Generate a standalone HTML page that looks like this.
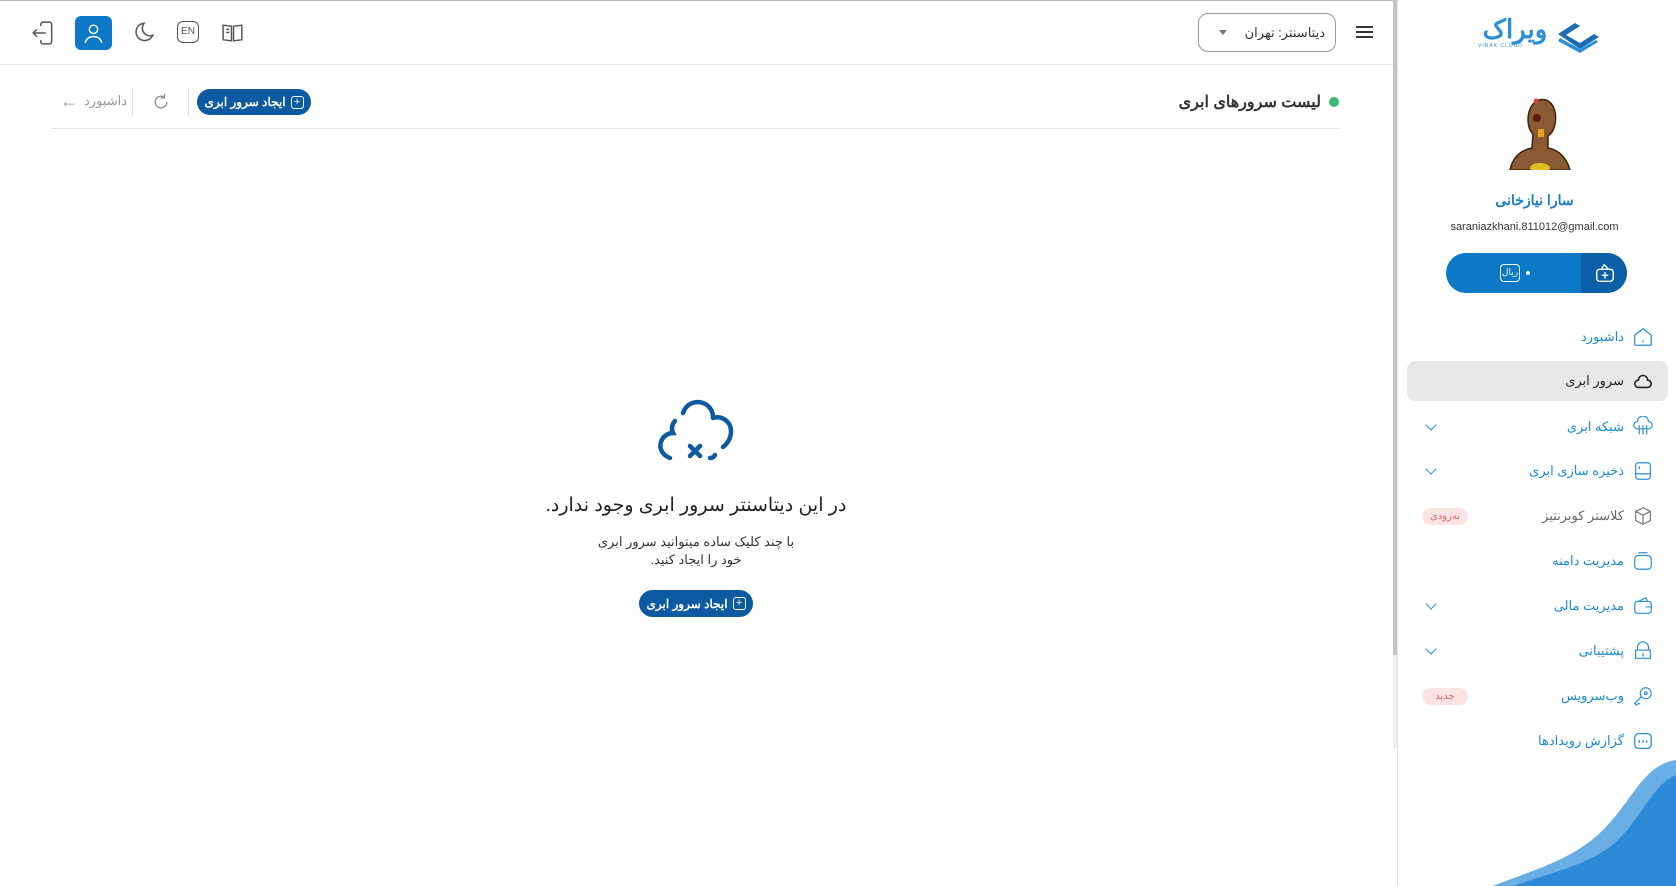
<!DOCTYPE html>
<html><head><meta charset="utf-8"><style>
*{margin:0;padding:0;box-sizing:border-box}
body{width:1676px;height:886px;background:#fff;position:relative;overflow:hidden;font-family:"Liberation Sans","Noto Sans CJK SC",sans-serif;color:#333}
.a{position:absolute}
.r{direction:rtl}
.btn{background:#0b5aa2;color:#fff;border-radius:14px;font-size:12px;font-weight:bold;display:flex;align-items:center;justify-content:center;gap:5px;direction:rtl}
.pl{width:13px;height:13px;border:1.3px solid #fff;border-radius:3px;font-size:11px;line-height:10px;text-align:center;font-weight:normal}
.mi{position:absolute;right:22px;display:flex;align-items:center;gap:8px;direction:rtl;font-size:13px;color:#1a8ad0}
.chev{position:absolute;left:1427px;width:8px;height:8px;border-right:1.6px solid #2a8fd6;border-bottom:1.6px solid #2a8fd6;transform:rotate(45deg)}
.badge{position:absolute;left:1422px;width:46px;height:17px;border-radius:9px;background:#fde4e4;color:#e06666;font-size:10px;text-align:center;line-height:17px}
</style></head><body>
<div class="a" style="left:0;top:0;width:1393px;height:1px;background:#bbb"></div>
<div class="a" style="left:0;top:64px;width:1393px;height:1px;background:#e6e6e6"></div>
<svg class="a" style="left:30px;top:20px" width="26" height="26" viewBox="0 0 24 24" fill="none" stroke="#555" stroke-width="1.4" stroke-linecap="round"><path d="M10 5V4a2 2 0 0 1 2-2h6a2 2 0 0 1 2 2v16a2 2 0 0 1-2 2h-6a2 2 0 0 1-2-2v-1"/><path d="M14 12H3m3-3-3 3 3 3"/></svg>
<div class="a" style="left:75px;top:16px;width:37px;height:34px;background:#0b78c8;border-radius:6px"></div>
<svg class="a" style="left:81px;top:21px" width="25" height="25" viewBox="0 0 24 24" fill="none" stroke="#fff" stroke-width="1.4"><circle cx="12" cy="8" r="4"/><path d="M4 21c1-4 4-6 8-6s7 2 8 6"/></svg>
<svg class="a" style="left:130px;top:20px" width="26" height="26" viewBox="0 0 24 24" fill="none" stroke="#555" stroke-width="1.4"><path d="M13 3a8 8 0 1 0 8 11A7 7 0 0 1 13 3z"/></svg>
<div class="a" style="left:177px;top:21px;width:22px;height:22px;border:1.4px solid #555;border-radius:6px;font-size:10px;line-height:19px;text-align:center;color:#555">EN</div>
<svg class="a" style="left:220px;top:20px" width="25" height="25" viewBox="0 0 24 24" fill="none" stroke="#555" stroke-width="1.4"><path d="M3 5l8 1v14l-8-1zM21 5l-8 1v14l8-1z"/><path d="M6 9h3M6 12h3"/></svg>
<div class="a r" style="left:1198px;top:13px;width:138px;height:39px;border:1px solid #999;border-radius:10px;font-size:13px;line-height:37px;padding-right:10px;color:#333">دیتاسنتر: تهران</div>
<div class="a" style="left:1219px;top:30px;border-left:4px solid transparent;border-right:4px solid transparent;border-top:5px solid #777"></div>
<div class="a" style="left:1356px;top:26px;width:17px;height:2px;background:#333;box-shadow:0 5px 0 #333,0 10px 0 #333"></div>
<div class="a" style="left:1329px;top:97px;width:10px;height:10px;border-radius:50%;background:#3cb878"></div>
<div class="a r" style="right:355px;top:92px;font-size:16px;font-weight:bold;color:#333">لیست سرورهای ابری</div>
<div class="a btn" style="left:197px;top:89px;width:114px;height:26px"><span class="pl">+</span>ایجاد سرور ابری</div>
<div class="a" style="left:188px;top:88px;width:1px;height:28px;background:#ddd"></div>
<div class="a" style="left:132px;top:88px;width:1px;height:28px;background:#ddd"></div>
<svg class="a" style="left:151px;top:92px" width="20" height="20" viewBox="0 0 24 24" fill="none" stroke="#888" stroke-width="1.5"><path d="M19 12a7 7 0 1 1-3-5.7"/><path d="M16 3v4h-4" stroke-linecap="round"/></svg>
<div class="a r" style="left:84px;top:93px;font-size:13px;color:#999">داشبورد</div>
<div class="a" style="left:60px;top:92px;color:#999;font-size:18px;line-height:18px">←</div>
<div class="a" style="left:51px;top:128px;width:1289px;height:1px;background:#e6e6e6"></div>
<svg class="a" style="left:656px;top:398px" width="80" height="66" viewBox="0 0 80 66" fill="none" stroke="#0b5aa2" stroke-width="4.5" stroke-linecap="round"><path d="M14 60C6 57 3 50 5 44c2-6 7-9 12-9 -2-4-1-9 2-12"/><path d="M27 15c3-9 12-13 20-10 6 2 10 8 10 14"/><path d="M57 20c9-3 18 4 18 13 0 7-3 12-8 16"/><path d="M59 57c-1 2-3 3-5 3"/><path d="M34 48l10 10M44 48l-10 10"/></svg>
<div class="a r" style="left:400px;width:592px;top:494px;text-align:center;font-size:19px;color:#222">در این دیتاسنتر سرور ابری وجود ندارد.</div>
<div class="a r" style="left:500px;width:392px;top:533px;text-align:center;font-size:13px;color:#333;line-height:18px">با چند کلیک ساده میتوانید سرور ابری<br>خود را ایجاد کنید.</div>
<div class="a btn" style="left:639px;top:590px;width:114px;height:27px"><span class="pl">+</span>ایجاد سرور ابری</div>
<div class="a" style="left:1393px;top:0;width:4px;height:655px;background:#c4c4c4"></div>
<div class="a" style="left:1393px;top:655px;width:4px;height:93px;background:#eee"></div>
<div class="a" style="left:1397px;top:0;width:1px;height:886px;background:#e4e4e4"></div>
<!-- logo -->
<svg class="a" style="left:1558px;top:16px" width="42" height="38" viewBox="85 0 42 38"><path d="M85 18l17-11 5 3-14 9 14 8 14-9 5 3-19 12z" fill="#1c6cb6"/><path d="M85 25l22 12 18-11-2-2-16 9-20-11z" fill="#2a8fd6"/></svg>
<div class="a r" style="left:1474px;top:14px;width:82px;text-align:center;font-size:26px;font-weight:bold;color:#2a8fd6;line-height:30px">ویراک</div>
<div class="a" style="left:1478px;top:43px;font-size:5px;color:#2a8fd6;letter-spacing:1px">VIRAK CLOUD</div>
<svg class="a" style="left:1508px;top:94px" width="64" height="76" viewBox="0 0 64 76"><path d="M2 76c3-14 12-20 22-22l1-14c-5-5-6-14-4-22 3-10 10-14 17-12 8 3 11 13 9 24-1 6-4 10-7 12v12c10 2 18 8 22 22z" fill="#8a5a33" stroke="#3a2410" stroke-width="1.5"/><circle cx="29" cy="24" r="4" fill="#5a1a10"/><rect x="30" y="35" width="6" height="8" fill="#e8a020"/><circle cx="28" cy="7" r="2.5" fill="#e04040"/><ellipse cx="32" cy="74" rx="10" ry="5" fill="#e0c020"/></svg>
<div class="a r" style="left:1393px;width:283px;top:192px;text-align:center;font-size:14px;font-weight:bold;color:#1a7cc8">سارا نیازخانی</div>
<div class="a" style="left:1393px;width:283px;top:221px;text-align:center;font-size:11px;color:#333">saraniazkhani.811012@gmail.com</div>
<div class="a" style="left:1446px;top:253px;width:181px;height:40px;border-radius:20px;background:#0b78c8;overflow:hidden"><div style="position:absolute;right:0;top:0;width:46px;height:40px;background:#0a5fa8"></div></div>
<svg class="a" style="left:1594px;top:262px" width="22" height="22" viewBox="0 0 24 24" fill="none" stroke="#fff" stroke-width="1.5"><rect x="3" y="8" width="18" height="13" rx="3"/><path d="M8 8l3-5 5 5M12 11v7M8.5 14.5h7"/></svg>
<div class="a" style="left:1500px;top:264px;width:20px;height:18px;border:1.4px solid #fff;border-radius:4px;color:#fff;font-size:9px;text-align:center;line-height:15px">ریال</div>
<div class="a" style="left:1526px;top:271px;width:4px;height:4px;border-radius:50%;background:#fff"></div>
<div class="a" style="left:1407px;top:361px;width:261px;height:40px;background:#e8e8e8;border-radius:8px"></div>
<div class="mi" style="top:326px">
<svg width="22" height="22" viewBox="0 0 24 24" fill="none" stroke="#2a8fd6" stroke-width="1.4"><path d="M3 10l9-7 9 7v10a1 1 0 0 1-1 1H4a1 1 0 0 1-1-1z"/><path d="M12 16v2"/></svg><span>داشبورد</span></div>
<div class="mi" style="top:370px;color:#222">
<svg width="22" height="22" viewBox="0 0 24 24" fill="none" stroke="#222" stroke-width="1.7"><path d="M7 19a4 4 0 0 1 0-8 5 5 0 0 1 10 0 4 4 0 0 1 0 8z"/></svg><span>سرور ابری</span></div>
<div class="mi" style="top:416px">
<svg width="22" height="22" viewBox="0 0 24 24" fill="none" stroke="#2a8fd6" stroke-width="1.3"><path d="M6 14a4 4 0 0 1 0-8 5 5 0 0 1 12 0 4 4 0 0 1 0 8z"/><path d="M8 10v10M12 10v10M16 10v10"/></svg><span>شبکه ابری</span></div>
<div class="chev" style="top:421px"></div>
<div class="mi" style="top:460px">
<svg width="22" height="22" viewBox="0 0 24 24" fill="none" stroke="#2a8fd6" stroke-width="1.3"><rect x="4" y="3" width="16" height="18" rx="3"/><path d="M4 15h16M8 7v3"/></svg><span>ذخیره سازی ابری</span></div>
<div class="chev" style="top:465px"></div>
<div class="mi" style="top:505px;color:#666">
<svg width="22" height="22" viewBox="0 0 24 24" fill="none" stroke="#777" stroke-width="1.3"><path d="M12 3l8 4v10l-8 4-8-4V7z"/><path d="M4 7l8 4 8-4M12 11v10"/></svg><span>کلاستر کوبرنتیز</span></div>
<div class="badge" style="top:508px">به‌زودی</div>
<div class="mi" style="top:550px">
<svg width="22" height="22" viewBox="0 0 24 24" fill="none" stroke="#2a8fd6" stroke-width="1.3"><rect x="3" y="6" width="18" height="15" rx="4"/><path d="M7 3h10"/></svg><span>مدیریت دامنه</span></div>
<div class="mi" style="top:595px">
<svg width="22" height="22" viewBox="0 0 24 24" fill="none" stroke="#2a8fd6" stroke-width="1.3"><rect x="3" y="7" width="18" height="13" rx="3"/><path d="M7 7l8-4 2 4M15 13h6"/></svg><span>مدیریت مالی</span></div>
<div class="chev" style="top:600px"></div>
<div class="mi" style="top:640px">
<svg width="22" height="22" viewBox="0 0 24 24" fill="none" stroke="#2a8fd6" stroke-width="1.3"><path d="M6 8a6 6 0 0 1 12 0v3H6zM4 11h16v9H4zM12 14v4"/></svg><span>پشتیبانی</span></div>
<div class="chev" style="top:645px"></div>
<div class="mi" style="top:685px">
<svg width="22" height="22" viewBox="0 0 24 24" fill="none" stroke="#2a8fd6" stroke-width="1.3"><circle cx="15" cy="9" r="6"/><path d="M10 13l-7 7 2 2 2-2 2 1"/><circle cx="15" cy="9" r="1.5"/></svg><span>وب‌سرویس</span></div>
<div class="badge" style="top:688px">جدید</div>
<div class="mi" style="top:730px">
<svg width="22" height="22" viewBox="0 0 24 24" fill="none" stroke="#2a8fd6" stroke-width="1.4"><rect x="3" y="4" width="18" height="16" rx="4"/><path d="M8 11v3M12 11v3M16 11v3"/></svg><span>گزارش رویدادها</span></div>
<svg class="a" style="left:1493px;top:760px" width="183" height="126" viewBox="0 0 183 126"><path d="M0 126C40 110 80 100 110 70 140 40 150 5 183 0V126z" fill="#6aaee6"/><path d="M20 126C60 112 100 104 125 80 150 55 160 25 183 15V126z" fill="#2d8ad6"/></svg>
</body></html>
